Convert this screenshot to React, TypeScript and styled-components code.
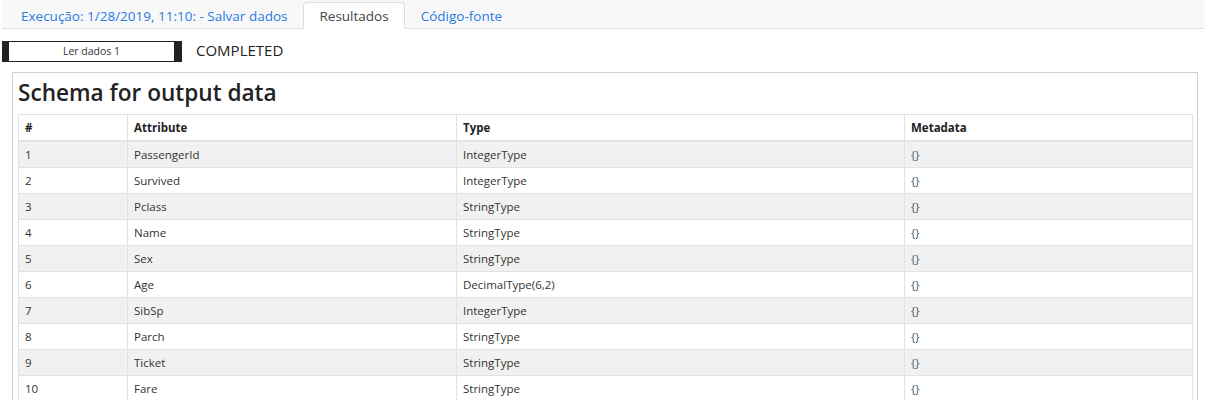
import React from "react";
import styled, { createGlobalStyle } from "styled-components";

const GlobalStyle = createGlobalStyle`
  body {
    margin: 0;
    background: #fff;
    font-family: "Open Sans", "Noto Sans", sans-serif;
    color: #333;
  }
`;

const rows = [
  { n: 1, attr: "PassengerId", type: "IntegerType" },
  { n: 2, attr: "Survived", type: "IntegerType" },
  { n: 3, attr: "Pclass", type: "StringType" },
  { n: 4, attr: "Name", type: "StringType" },
  { n: 5, attr: "Sex", type: "StringType" },
  { n: 6, attr: "Age", type: "DecimalType(6,2)" },
  { n: 7, attr: "SibSp", type: "IntegerType" },
  { n: 8, attr: "Parch", type: "StringType" },
  { n: 9, attr: "Ticket", type: "StringType" },
  { n: 10, attr: "Fare", type: "StringType" },
  { n: 11, attr: "Cabin", type: "StringType" },
];

export default function App() {
  return (
    <>
      <GlobalStyle />
      <Page>
        <TabBar>
          <Tab>Execução: 1/28/2019, 11:10: - Salvar dados</Tab>
          <Tab $active>Resultados</Tab>
          <Tab>Código-fonte</Tab>
        </TabBar>

        <StatusRow>
          <TaskBox>Ler dados 1</TaskBox>
          <Status>COMPLETED</Status>
        </StatusRow>

        <Panel>
          <Heading>Schema for output data</Heading>
          <Table>
            <colgroup>
              <col style={{ width: 109 }} />
              <col style={{ width: 329 }} />
              <col style={{ width: 448 }} />
              <col />
            </colgroup>
            <thead>
              <tr>
                <Th>#</Th>
                <Th>Attribute</Th>
                <Th>Type</Th>
                <Th>Metadata</Th>
              </tr>
            </thead>
            <tbody>
              {rows.map((r) => (
                <Tr key={r.n}>
                  <Td>{r.n}</Td>
                  <Td>{r.attr}</Td>
                  <Td>{r.type}</Td>
                  <Td>
                    <Braces>{"{}"}</Braces>
                  </Td>
                </Tr>
              ))}
            </tbody>
          </Table>
        </Panel>
      </Page>
    </>
  );
}

const Page = styled.div`
  height: 400px;
  overflow: hidden;
  padding: 0 2px;
  box-sizing: border-box;
`;

const TabBar = styled.div`
  display: flex;
  align-items: flex-end;
  height: 28px;
  background: #f8f8f8;
  border-bottom: 1px solid #dedede;
  padding-left: 3px;
`;

const Tab = styled.div<{ $active?: boolean }>`
  height: 27px;
  box-sizing: border-box;
  padding: 0 15px;
  display: flex;
  align-items: center;
  font-size: 13.5px;
  color: ${({ $active }) => ($active ? "#444" : "#2a7be4")};
  background: ${({ $active }) => ($active ? "#fff" : "transparent")};
  border: 1px solid ${({ $active }) => ($active ? "#dedede" : "transparent")};
  border-bottom: none;
  border-radius: 4px 4px 0 0;
  margin-bottom: -1px;
`;

const StatusRow = styled.div`
  display: flex;
  align-items: center;
  gap: 14px;
  margin-top: 11px;
  height: 22px;
`;

const TaskBox = styled.div`
  width: 180px;
  height: 21px;
  box-sizing: border-box;
  border: 1px solid #222;
  border-left: 7px solid #222;
  border-right: 8px solid #222;
  display: flex;
  align-items: center;
  justify-content: center;
  font-size: 10.5px;
  color: #333;
  background: #fff;
`;

const Status = styled.div`
  font-size: 15px;
  color: #222;
  margin-top: -2px;
`;

const Panel = styled.div`
  margin: 10px 6px 0 10px;
  border: 1px solid #cfcfcf;
  border-bottom: none;
  padding: 3px 4px 0 5px;
`;

const Heading = styled.h2`
  margin: 0 0 4px 0;
  font-size: 22.6px;
  font-weight: 600;
  color: #222;
  line-height: 34px;
`;

const Table = styled.table`
  width: 100%;
  border-collapse: collapse;
  table-layout: fixed;
  font-size: 11.5px;
  color: #333;
`;

const Th = styled.th`
  text-align: left;
  font-weight: 700;
  color: #222;
  height: 25px;
  padding: 0 6px;
  border: 1px solid #dfe2e6;
  border-bottom: 2px solid #dfe2e6;
`;

const Tr = styled.tr`
  &:nth-child(odd) {
    background: #f1f1f1;
  }
`;

const Td = styled.td`
  height: 25px;
  padding: 0 6px;
  border: 1px solid #dfe2e6;
`;

const Braces = styled.span`
  color: #4a5a6a;
`;
